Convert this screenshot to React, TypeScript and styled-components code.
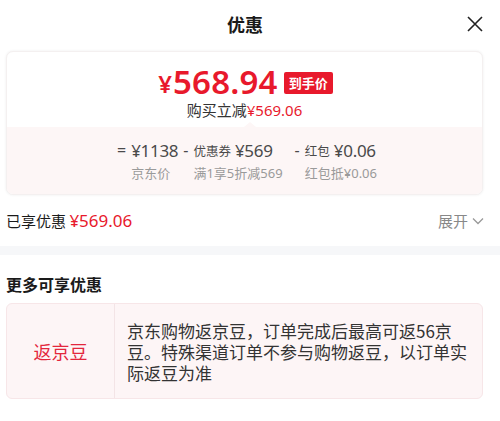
import styled, { createGlobalStyle } from "styled-components";

const GlobalStyle = createGlobalStyle`
  html, body {
    margin: 0;
    padding: 0;
    background: #fff;
    font-family: "Noto Sans", "Noto Sans CJK SC", sans-serif;
    color: #1a1a1a;
  }
`;

const RED = "#e8192c";

const Page = styled.div`
  width: 500px;
  height: 421px;
  overflow: hidden;
  background: #fff;
`;

const Header = styled.div`
  position: relative;
  height: 48px;
  display: flex;
  align-items: center;
  justify-content: center;
  margin-bottom: 3px;
`;

const Title = styled.div`
  font-family: "Noto Sans CJK SC", sans-serif;
  font-size: 18px;
  font-weight: 700;
  color: #1a1a1a;
  margin-left: -10px;
`;

const CloseBtn = styled.div`
  position: absolute;
  right: 17px;
  top: 16px;
  width: 16px;
  height: 16px;
  display: flex;
`;

const Card = styled.div`
  margin: 0 17px 0 6px;
  border-radius: 7px;
  background: #fff;
  box-shadow: 0 0 3px rgba(0, 0, 0, 0.07);
  border: 1px solid #f4f0f0;
  overflow: hidden;
`;

const CardTop = styled.div`
  display: flex;
  flex-direction: column;
  align-items: center;
  padding: 13px 0 6px;
`;

const PriceLine = styled.div`
  display: flex;
  align-items: center;
  height: 34px;
  line-height: 34px;
  color: ${RED};
  margin-left: 2px;
`;

const Yen = styled.span`
  font-size: 24px;
  font-weight: 600;
  margin-right: 1px;
  margin-top: 3px;
`;

const BigPrice = styled.span`
  font-size: 33px;
  font-weight: 600;
  letter-spacing: 0.2px;
`;

const Tag = styled.span`
  margin-left: 6px;
  background: ${RED};
  color: #fff;
  font-family: "Noto Sans CJK SC", sans-serif;
  font-size: 13px;
  line-height: 22px;
  font-weight: 700;
  height: 22px;
  padding: 0 5px;
  border-radius: 2px;
  display: flex;
  align-items: center;
  margin-top: 2px;
`;

const SaveLine = styled.div`
  height: 22px;
  line-height: 22px;
  font-family: "Noto Sans CJK SC", sans-serif;
  font-size: 15px;
  color: #333;
  span {
    color: ${RED};
    font-family: "Noto Sans", "Noto Sans CJK SC", sans-serif;
  }
`;

const CardBottom = styled.div`
  position: relative;
  background: #fdf6f6;
  padding: 12px 0 12px;
  display: flex;
  justify-content: center;
  align-items: flex-start;
  &::before {
    content: "";
    position: absolute;
    top: -5px;
    left: 237px;
    border-left: 6px solid transparent;
    border-right: 6px solid transparent;
    border-bottom: 5px solid #fdf6f6;
  }
`;

const Op = styled.span<{ $wide?: boolean }>`
  height: 22px;
  line-height: 22px;
  font-size: 16px;
  color: #4a4a4a;
  margin: 0 5px 0 ${(p) => (p.$wide ? 12 : 5)}px;
`;

const Term = styled.div`
  display: flex;
  flex-direction: column;
  align-items: flex-start;
`;

const TermTop = styled.div`
  height: 22px;
  display: flex;
  align-items: center;
  color: #4a4a4a;
  white-space: pre;
`;

const Label = styled.span`
  font-family: "Noto Sans CJK SC", sans-serif;
  font-size: 12.5px;
  margin-right: 4px;
`;

const Value = styled.span`
  font-size: 17px;
  letter-spacing: -0.3px;
`;

const TermSub = styled.div`
  margin-top: 3px;
  height: 18px;
  line-height: 18px;
  font-family: "Noto Sans", "Noto Sans CJK SC", sans-serif;
  font-size: 13px;
  color: #9a9a9a;
  white-space: nowrap;
`;

const SavedRow = styled.div`
  height: 51px;
  display: flex;
  align-items: center;
  justify-content: space-between;
  padding: 0 16px 0 6px;
`;

const SavedText = styled.div`
  font-family: "Noto Sans CJK SC", sans-serif;
  font-size: 15px;
  color: #1a1a1a;
  span {
    color: ${RED};
    font-family: "Noto Sans", "Noto Sans CJK SC", sans-serif;
    font-size: 17px;
  }
`;

const Expand = styled.div`
  display: flex;
  align-items: center;
  gap: 4px;
  font-family: "Noto Sans CJK SC", sans-serif;
  font-size: 15px;
  color: #888;
`;

const Band = styled.div`
  height: 9px;
  background: #f6f7f9;
`;

const Section = styled.div`
  padding: 18px 17px 0 6px;
`;

const SectionTitle = styled.div`
  height: 22px;
  line-height: 22px;
  font-family: "Noto Sans CJK SC", sans-serif;
  font-size: 16px;
  font-weight: 700;
  color: #1a1a1a;
`;

const PerkBox = styled.div`
  margin-top: 8px;
  display: flex;
  background: #fdf5f6;
  border: 1px solid #f7e6e8;
  border-radius: 6px;
  min-height: 93px;
`;

const PerkName = styled.div`
  width: 107px;
  flex-shrink: 0;
  display: flex;
  align-items: center;
  justify-content: center;
  border-right: 1px solid #f3e4e6;
  font-family: "Noto Sans CJK SC", sans-serif;
  font-size: 18px;
  color: #e3273d;
`;

const PerkDesc = styled.div`
  flex: 1;
  padding: 16px 12px 15px 12px;
  font-family: "Noto Sans CJK SC", sans-serif;
  font-size: 17px;
  line-height: 21px;
  color: #333;
`;

const App = () => {
  return (
    <Page>
      <GlobalStyle />
      <Header>
        <Title>优惠</Title>
        <CloseBtn>
          <svg width="16" height="16" viewBox="0 0 16 16">
            <path d="M1 1L15 15M15 1L1 15" stroke="#222" strokeWidth="1.6" />
          </svg>
        </CloseBtn>
      </Header>
      <Card>
        <CardTop>
          <PriceLine>
            <Yen>¥</Yen>
            <BigPrice>568.94</BigPrice>
            <Tag>到手价</Tag>
          </PriceLine>
          <SaveLine>
            购买立减<span>¥569.06</span>
          </SaveLine>
        </CardTop>
        <CardBottom>
          <Op>=</Op>
          <Term>
            <TermTop>
              <Value>¥1138</Value>
            </TermTop>
            <TermSub>京东价</TermSub>
          </Term>
          <Op>-</Op>
          <Term>
            <TermTop>
              <Label>优惠券</Label>
              <Value>¥569</Value>
            </TermTop>
            <TermSub>满1享5折减569</TermSub>
          </Term>
          <Op $wide>-</Op>
          <Term>
            <TermTop>
              <Label>红包</Label>
              <Value>¥0.06</Value>
            </TermTop>
            <TermSub>红包抵¥0.06</TermSub>
          </Term>
        </CardBottom>
      </Card>
      <SavedRow>
        <SavedText>
          已享优惠 <span>¥569.06</span>
        </SavedText>
        <Expand>
          展开
          <svg width="12" height="8" viewBox="0 0 12 8">
            <path d="M1 1.5L6 6.5L11 1.5" stroke="#999" strokeWidth="1.3" fill="none" />
          </svg>
        </Expand>
      </SavedRow>
      <Band />
      <Section>
        <SectionTitle>更多可享优惠</SectionTitle>
        <PerkBox>
          <PerkName>返京豆</PerkName>
          <PerkDesc>
            京东购物返京豆，订单完成后最高可返56京豆。特殊渠道订单不参与购物返豆，以订单实际返豆为准
          </PerkDesc>
        </PerkBox>
      </Section>
    </Page>
  );
};

export default App;
